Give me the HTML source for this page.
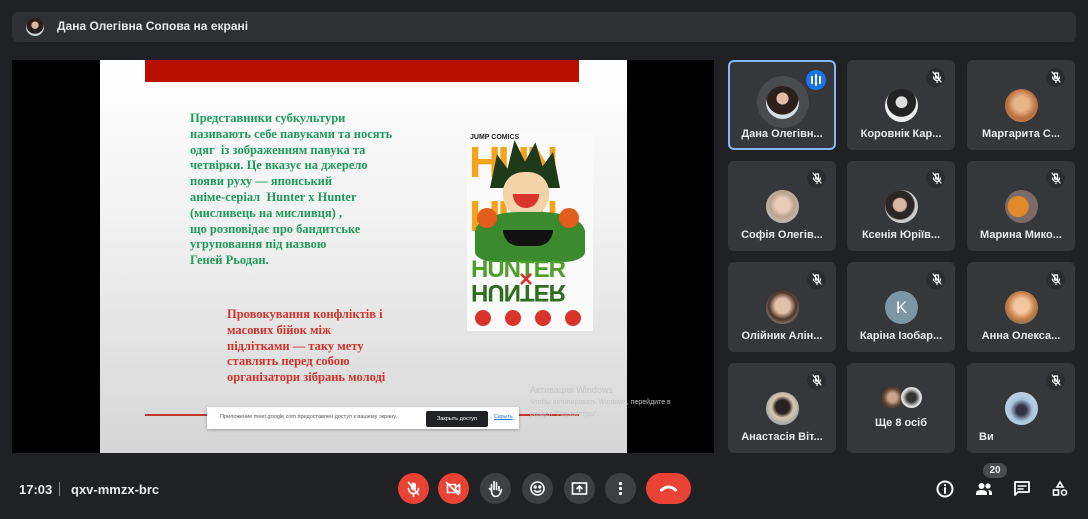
<!DOCTYPE html>
<html><head><meta charset="utf-8"><style>
*{margin:0;padding:0;box-sizing:border-box}
body{width:1088px;height:519px;background:#202124;position:relative;overflow:hidden;font-family:"Liberation Sans","DejaVu Sans",sans-serif;color:#e8eaed}
.abs{position:absolute}
.topbar{left:12px;top:12px;width:1064px;height:30px;background:#2f3033;border-radius:6px}
.tile{position:absolute;width:108px;height:90px;background:#36373a;border-radius:6px}
.tile .nm{position:absolute;left:0;right:0;top:68px;text-align:center;font-size:11px;font-weight:bold;color:#e8eaed;white-space:nowrap}
.av{position:absolute;width:33px;height:33px;border-radius:50%;left:38px;top:29px}
.mic{position:absolute;right:10px;top:8px;width:19px;height:19px;border-radius:50%;background:#2b2c2f}
.btn{position:absolute;top:473px;width:31px;height:31px;border-radius:50%;background:#3c4043}
.red{background:#ea4335}
.slide{font-family:"Liberation Serif",serif;font-weight:bold;font-size:12.5px;line-height:15.8px}
</style></head><body>
<div class="abs topbar"></div>
<div class="abs" style="left:26px;top:18px;width:18px;height:18px;border-radius:50%;background:radial-gradient(circle at 50% 40%,#d9b8a4 0 25%,#2a1f1c 27% 60%,#c9d3d8 62%)"></div>
<div class="abs" style="left:57px;top:19px;font-size:12px;font-weight:bold;color:#e8eaed">Дана Олегівна Сопова на екрані</div>

<div class="abs" style="left:12px;top:60px;width:702px;height:393px;background:#000"></div>
<div class="abs" style="left:100px;top:60px;width:527px;height:393px;background:linear-gradient(180deg,#ffffff 0%,#f2f2f2 40%,#d6d6d6 100%)"></div>
<div class="abs" style="left:145px;top:60px;width:434px;height:22px;background:#b90f00"></div>
<div class="abs slide" style="left:190px;top:111px;color:#1f9a5a;width:240px">Представники субкультури<br>називають себе павуками та носять<br>одяг&nbsp; із зображенням павука та<br>четвірки. Це вказує на джерело<br>появи руху — японський<br>аніме-серіал&nbsp; Hunter x Hunter<br>(мисливець на мисливця) ,<br>що розповідає про бандитське<br>угруповання під назвою<br>Геней Рьодан.</div>
<div class="abs slide" style="left:227px;top:307px;color:#d2322a">Провокування конфліктів і<br>масових бійок між<br>підлітками — таку мету<br>ставлять перед собою<br>організатори зібрань молоді</div>
<div class="abs" style="left:467px;top:132px;width:126px;height:199px;background:#fafafa;overflow:hidden">
 <div class="abs" style="left:3px;top:2px;font-size:7px;font-weight:bold;color:#222">JUMP COMICS</div>
 <div class="abs" style="left:2px;top:10px;width:120px;height:42px;font:bold 44px/42px 'Liberation Sans';color:#f4a31a;letter-spacing:-3px">HUN</div>
 <div class="abs" style="left:2px;top:64px;width:120px;height:42px;font:bold 44px/42px 'Liberation Sans';color:#f4a31a;letter-spacing:-3px">HUN</div>
 <div class="abs" style="left:23px;top:8px;width:70px;height:48px;background:#1e3a1a;clip-path:polygon(0 100%,10% 30%,25% 60%,35% 0,50% 45%,65% 5%,75% 55%,90% 25%,100% 100%)"></div>
 <div class="abs" style="left:36px;top:40px;width:46px;height:44px;border-radius:45%;background:#f3d4a8"></div>
 <div class="abs" style="left:46px;top:62px;width:26px;height:14px;border-radius:0 0 14px 14px;background:#d8342b"></div>
 <div class="abs" style="left:8px;top:80px;width:110px;height:50px;border-radius:40% 40% 20% 20%;background:#3c8a2e"></div>
 <div class="abs" style="left:10px;top:76px;width:20px;height:20px;border-radius:50%;background:#e35d1c"></div>
 <div class="abs" style="left:92px;top:76px;width:20px;height:20px;border-radius:50%;background:#e35d1c"></div>
 <div class="abs" style="left:36px;top:98px;width:50px;height:16px;border-radius:0 0 25px 25px;background:#111"></div>
 <div class="abs" style="left:4px;top:126px;font:bold 24px/24px 'Liberation Sans';color:#4d9e2a;letter-spacing:-1px">HUNTER</div>
 <div class="abs" style="left:4px;top:148px;font:bold 24px/24px 'Liberation Sans';color:#2d6e1f;letter-spacing:-1px;transform:scaleY(-1)">HUNTER</div>
 <div class="abs" style="left:52px;top:136px;font:bold 24px/24px 'Liberation Sans';color:#d8342b">×</div>
 <div class="abs" style="left:8px;top:178px;width:16px;height:16px;border-radius:50%;background:#d8342b"></div>
 <div class="abs" style="left:38px;top:178px;width:16px;height:16px;border-radius:50%;background:#d8342b"></div>
 <div class="abs" style="left:68px;top:178px;width:16px;height:16px;border-radius:50%;background:#d8342b"></div>
 <div class="abs" style="left:98px;top:178px;width:16px;height:16px;border-radius:50%;background:#d8342b"></div>
</div>
<div class="abs" style="left:145px;top:414px;width:434px;height:2px;background:#c0392b"></div>
<div class="abs" style="left:530px;top:385px;font-size:9px;color:#c4c4c4;line-height:11px">Активация Windows<br><span style="font-size:7px">Чтобы активировать Windows, перейдите в<br>раздел "Параметры".</span></div>
<div class="abs" style="left:207px;top:407px;width:312px;height:22px;background:#fff;box-shadow:0 1px 3px rgba(0,0,0,.3)"></div>
<div class="abs" style="left:220px;top:414px;font-size:5.5px;color:#555">Приложение meet.google.com предоставлен доступ к вашему экрану.</div>
<div class="abs" style="left:426px;top:411px;width:62px;height:16px;background:#202124;border-radius:2px;color:#fff;font-size:5.5px;text-align:center;line-height:16px">Закрыть доступ</div>
<div class="abs" style="left:494px;top:414px;font-size:5.5px;color:#1a73e8;text-decoration:underline">Скрыть</div>

<div class="tile" style="left:728px;top:60px;border:2px solid #8ab4f8"><div class="abs" style="left:27px;top:14px;width:52px;height:52px;border-radius:50%;background:#4a4b4e"></div><div class="av" style="left:36px;top:24px;background:radial-gradient(circle at 50% 38%,#e0bca6 0 22%,#2b201c 24% 60%,#d5dde2 62%)"></div><div class="abs" style="right:8px;top:8px;width:20px;height:20px;border-radius:50%;background:#1a73e8"><div class="abs" style="left:5px;top:6px;width:2px;height:8px;background:#fff;border-radius:1px"></div><div class="abs" style="left:9px;top:4px;width:2px;height:12px;background:#fff;border-radius:1px"></div><div class="abs" style="left:13px;top:6px;width:2px;height:8px;background:#fff;border-radius:1px"></div></div><div class="nm" style="top:66px">Дана Олегівн...</div></div>
<div class="tile" style="left:847px;top:60px"><div class="mic"></div><div class="av" style="background:radial-gradient(circle at 50% 40%,#ddd 0 22%,#222 24% 55%,#eee 58%)"></div><div class="nm">Коровнік Кар...</div></div>
<div class="tile" style="left:967px;top:60px"><div class="mic"></div><div class="av" style="background:radial-gradient(circle at 50% 45%,#e8b588 0 30%,#b86d3d 60%,#d89a60)"></div><div class="nm">Маргарита С...</div></div>
<div class="tile" style="left:728px;top:161px"><div class="mic"></div><div class="av" style="background:radial-gradient(circle at 50% 45%,#e9cbb8 0 28%,#b9a38e 50%,#c8d6e0)"></div><div class="nm">Софія Олегів...</div></div>
<div class="tile" style="left:847px;top:161px"><div class="mic"></div><div class="av" style="background:radial-gradient(circle at 45% 45%,#d9b7a4 0 25%,#2b2523 30% 55%,#ccc 60%)"></div><div class="nm">Ксенія Юріїв...</div></div>
<div class="tile" style="left:967px;top:161px"><div class="mic"></div><div class="av" style="background:radial-gradient(circle at 40% 50%,#e28a2a 0 40%,#7a6a68 42%)"></div><div class="nm">Марина Мико...</div></div>
<div class="tile" style="left:728px;top:262px"><div class="mic"></div><div class="av" style="background:radial-gradient(circle at 50% 45%,#e3c0a8 0 30%,#4a3528 55%,#cfc8c0)"></div><div class="nm">Олійник Алін...</div></div>
<div class="tile" style="left:847px;top:262px"><div class="mic"></div><div class="av" style="background:#7b97a6;color:#fff;font-size:17px;text-align:center;line-height:33px">K</div><div class="nm">Каріна Ізобар...</div></div>
<div class="tile" style="left:967px;top:262px"><div class="mic"></div><div class="av" style="background:radial-gradient(circle at 50% 45%,#f2c69e 0 30%,#c97c45 55%,#3b6e6a)"></div><div class="nm">Анна Олекса...</div></div>
<div class="tile" style="left:728px;top:363px"><div class="mic"></div><div class="av" style="background:radial-gradient(circle at 50% 45%,#2a2220 0 28%,#d8c8b0 45%,#6a8aa0)"></div><div class="nm">Анастасія Віт...</div></div>
<div class="tile" style="left:847px;top:363px"><div class="abs" style="left:35px;top:24px;width:21px;height:21px;border-radius:50%;background:radial-gradient(#c9a48a 0 30%,#5a4232 60%)"></div><div class="abs" style="left:54px;top:24px;width:21px;height:21px;border-radius:50%;background:radial-gradient(#333 0 30%,#ddd 60%)"></div><div class="nm" style="top:54px">Ще 8 осіб</div></div>
<div class="tile" style="left:967px;top:363px"><div class="mic"></div><div class="av" style="background:radial-gradient(circle at 50% 55%,#334 0 20%,#a8c4dc 45%,#d8e4ee)"></div><div class="nm" style="text-align:left;left:12px;top:68px">Ви</div></div>

<div class="abs" style="left:19px;top:482px;font-size:13px;font-weight:bold;color:#e8eaed">17:03</div>
<div class="abs" style="left:59px;top:482px;width:1px;height:14px;background:#8a8b8e"></div>
<div class="abs" style="left:71px;top:482px;font-size:13px;font-weight:bold;color:#e8eaed">qxv-mmzx-brc</div>

<div class="btn red" style="left:398px"></div>
<div class="btn red" style="left:438px"></div>
<div class="btn" style="left:480px"></div>
<div class="btn" style="left:522px"></div>
<div class="btn" style="left:564px"></div>
<div class="btn" style="left:605px"></div>
<div class="btn red" style="left:646px;width:45px;border-radius:16px"></div>
<svg class="abs" style="left:0;top:0" width="1088" height="519" fill="none" stroke="#fff" stroke-width="1.6" stroke-linecap="round">
 <g transform="translate(413.5,488.5)"><rect x="-2.5" y="-6" width="5" height="8" rx="2.5" fill="#fff" stroke="none"/><path d="M-5 0a5 5 0 0 0 10 0M0 5v3M-5-6l10 12"/></g>
 <g transform="translate(453.5,488.5)"><path d="M-6-4h8v8h-8zM2-1l4-3v8l-4-3M-7-6l12 12"/></g>
 <g transform="translate(495.5,488.5)"><path d="M-4 2v-6M-1.5 1v-8M1 1v-7M3.5 2v-4M-4 2c0 4 2 6 4 6s4-1 5-4l1-3M-4 2l-2-2"/></g>
 <g transform="translate(537.5,488.5)"><circle r="6.5"/><circle cx="-2.3" cy="-1.5" r=".8" fill="#fff"/><circle cx="2.3" cy="-1.5" r=".8" fill="#fff"/><path d="M-3 2q3 3 6 0"/></g>
 <g transform="translate(579.5,488.5)"><rect x="-7" y="-5.5" width="14" height="11"/><path d="M0 3v-5M-2.5 0l2.5-2.5 2.5 2.5" /></g>
 <g transform="translate(620.5,488.5)" fill="#fff" stroke="none"><circle cy="-5" r="1.6"/><circle r="1.6"/><circle cy="5" r="1.6"/></g>
 <g transform="translate(668.5,489)"><path d="M-7 1q7-6 14 0" stroke-width="3"/></g>
 <g stroke-width="1.2">
 <g transform="translate(937,77)"><path d="M-1.5-4h3v5h-3zM-3.5 0a3.5 3.5 0 0 0 7 0M0 3.5v2M-4-5l8 10"/></g>
 <g transform="translate(1056,77)"><path d="M-1.5-4h3v5h-3zM-3.5 0a3.5 3.5 0 0 0 7 0M0 3.5v2M-4-5l8 10"/></g>
 <g transform="translate(817,178)"><path d="M-1.5-4h3v5h-3zM-3.5 0a3.5 3.5 0 0 0 7 0M0 3.5v2M-4-5l8 10"/></g>
 <g transform="translate(937,178)"><path d="M-1.5-4h3v5h-3zM-3.5 0a3.5 3.5 0 0 0 7 0M0 3.5v2M-4-5l8 10"/></g>
 <g transform="translate(1056,178)"><path d="M-1.5-4h3v5h-3zM-3.5 0a3.5 3.5 0 0 0 7 0M0 3.5v2M-4-5l8 10"/></g>
 <g transform="translate(817,279)"><path d="M-1.5-4h3v5h-3zM-3.5 0a3.5 3.5 0 0 0 7 0M0 3.5v2M-4-5l8 10"/></g>
 <g transform="translate(937,279)"><path d="M-1.5-4h3v5h-3zM-3.5 0a3.5 3.5 0 0 0 7 0M0 3.5v2M-4-5l8 10"/></g>
 <g transform="translate(1056,279)"><path d="M-1.5-4h3v5h-3zM-3.5 0a3.5 3.5 0 0 0 7 0M0 3.5v2M-4-5l8 10"/></g>
 <g transform="translate(817,380)"><path d="M-1.5-4h3v5h-3zM-3.5 0a3.5 3.5 0 0 0 7 0M0 3.5v2M-4-5l8 10"/></g>
 <g transform="translate(1056,380)"><path d="M-1.5-4h3v5h-3zM-3.5 0a3.5 3.5 0 0 0 7 0M0 3.5v2M-4-5l8 10"/></g>
 </g>
 <g transform="translate(945,489)"><circle r="7.5" stroke-width="2"/><path d="M0-1v5M0-4v.2" stroke-width="2"/></g>
 <g transform="translate(984,489)" fill="#fff" stroke="none"><circle cx="-2.5" cy="-3" r="3"/><path d="M-8 6v-2q0-3 5.5-3t5.5 3v2z"/><circle cx="4" cy="-3" r="2.6"/><path d="M4 1q4 0 4 3v2h-3v-2q0-2-1-3z"/></g>
 <g transform="translate(1022,489)"><path d="M-7-7h14v10h-11l-3 3z" stroke-width="1.8" stroke-linejoin="round"/><path d="M-4-3h8M-4 0h5" stroke-width="1.5"/></g>
 <g transform="translate(1060,489)" stroke-width="1.6"><path d="M0-7l3 5h-6z"/><rect x="-6.5" y="1" width="5" height="5"/><circle cx="4" cy="3.5" r="2.5"/></g>
</svg>
<div class="abs" style="left:983px;top:463px;width:24px;height:15px;border-radius:8px;background:#4a4b4e;font-size:10px;font-weight:bold;text-align:center;line-height:15px;color:#e8eaed">20</div>
</body></html>
